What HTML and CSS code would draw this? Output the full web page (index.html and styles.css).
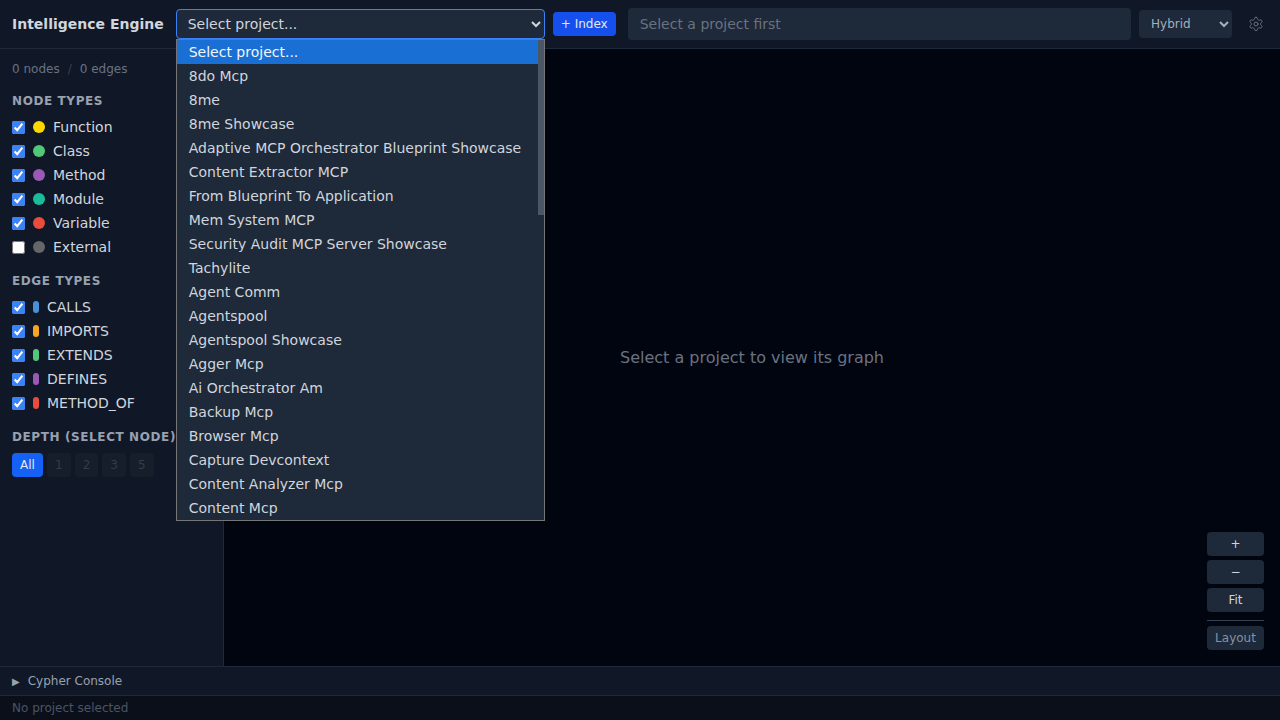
FILE: index.html
```html
<!DOCTYPE html>
<html lang="en">
<head>
<meta charset="utf-8">
<title>Intelligence Engine</title>
<link rel="stylesheet" href="styles.css">
</head>
<body>
<div class="app">
  <header class="topbar">
    <h1 class="brand">Intelligence Engine</h1>
    <div class="project-wrap">
      <select class="project-select"><option>Select project...</option></select>
      <div class="popup">
        <ul class="popup-list">
          <li class="active">Select project...</li>
          <li>8do Mcp</li>
          <li>8me</li>
          <li>8me Showcase</li>
          <li>Adaptive MCP Orchestrator Blueprint Showcase</li>
          <li>Content Extractor MCP</li>
          <li>From Blueprint To Application</li>
          <li>Mem System MCP</li>
          <li>Security Audit MCP Server Showcase</li>
          <li>Tachylite</li>
          <li>Agent Comm</li>
          <li>Agentspool</li>
          <li>Agentspool Showcase</li>
          <li>Agger Mcp</li>
          <li>Ai Orchestrator Am</li>
          <li>Backup Mcp</li>
          <li>Browser Mcp</li>
          <li>Capture Devcontext</li>
          <li>Content Analyzer Mcp</li>
          <li>Content Mcp</li>
        </ul>
        <div class="scrolltrack"><div class="scrollthumb"></div></div>
      </div>
    </div>
    <button class="index-btn">+ Index</button>
    <input class="search" placeholder="Select a project first" disabled>
    <select class="mode-select"><option>Hybrid</option></select>
    <button class="gear" aria-label="Settings">
      <svg width="16" height="16" viewBox="0 0 24 24" fill="none" stroke="currentColor" stroke-width="1.5" stroke-linecap="round" stroke-linejoin="round"><path d="M12.22 2h-.44a2 2 0 0 0-2 2v.18a2 2 0 0 1-1 1.73l-.43.25a2 2 0 0 1-2 0l-.15-.08a2 2 0 0 0-2.73.73l-.22.38a2 2 0 0 0 .73 2.73l.15.1a2 2 0 0 1 1 1.72v.51a2 2 0 0 1-1 1.74l-.15.09a2 2 0 0 0-.73 2.73l.22.38a2 2 0 0 0 2.73.73l.15-.08a2 2 0 0 1 2 0l.43.25a2 2 0 0 1 1 1.73V20a2 2 0 0 0 2 2h.44a2 2 0 0 0 2-2v-.18a2 2 0 0 1 1-1.73l.43-.25a2 2 0 0 1 2 0l.15.08a2 2 0 0 0 2.73-.73l.22-.39a2 2 0 0 0-.73-2.73l-.15-.08a2 2 0 0 1-1-1.74v-.5a2 2 0 0 1 1-1.74l.15-.09a2 2 0 0 0 .73-2.73l-.22-.38a2 2 0 0 0-2.73-.73l-.15.08a2 2 0 0 1-2 0l-.43-.25a2 2 0 0 1-1-1.73V4a2 2 0 0 0-2-2z"/><circle cx="12" cy="12" r="3"/></svg>
    </button>
  </header>

  <div class="main">
    <aside class="sidebar">
      <div class="stats"><span>0 nodes</span><span class="sep">/</span><span>0 edges</span></div>

      <h2 class="section-title first">NODE TYPES</h2>
      <label class="row"><input type="checkbox" checked><span class="dot c-yellow"></span>Function</label>
      <label class="row"><input type="checkbox" checked><span class="dot c-green"></span>Class</label>
      <label class="row"><input type="checkbox" checked><span class="dot c-purple"></span>Method</label>
      <label class="row"><input type="checkbox" checked><span class="dot c-teal"></span>Module</label>
      <label class="row"><input type="checkbox" checked><span class="dot c-red"></span>Variable</label>
      <label class="row"><input type="checkbox"><span class="dot c-gray"></span>External</label>

      <h2 class="section-title">EDGE TYPES</h2>
      <label class="row"><input type="checkbox" checked><span class="pill c-blue"></span>CALLS</label>
      <label class="row"><input type="checkbox" checked><span class="pill c-orange"></span>IMPORTS</label>
      <label class="row"><input type="checkbox" checked><span class="pill c-green"></span>EXTENDS</label>
      <label class="row"><input type="checkbox" checked><span class="pill c-purple"></span>DEFINES</label>
      <label class="row"><input type="checkbox" checked><span class="pill c-red"></span>METHOD_OF</label>

      <h2 class="section-title depth-title">DEPTH (SELECT NODE)</h2>
      <div class="depths">
        <button class="depth on">All</button>
        <button class="depth">1</button>
        <button class="depth">2</button>
        <button class="depth">3</button>
        <button class="depth">5</button>
      </div>
    </aside>

    <main class="canvas">
      <p class="empty">Select a project to view its graph</p>
      <div class="controls">
        <button class="ctl">+</button>
        <button class="ctl">−</button>
        <button class="ctl">Fit</button>
        <div class="ctl-sep"></div>
        <button class="ctl muted">Layout</button>
      </div>
    </main>
  </div>

  <div class="console"><span class="tri">▶</span>Cypher Console</div>
  <footer class="status">No project selected</footer>
</div>
</body>
</html>
```
FILE: styles.css
```css
* { box-sizing: border-box; }
html, body { margin: 0; height: 100%; }
body {
  font-family: "DejaVu Sans", sans-serif;
  background: #010510;
  color: #d1d5dc;
  overflow: hidden;
}
.app { display: flex; flex-direction: column; height: 720px; }

.topbar {
  height: 49px;
  flex: none;
  display: flex;
  align-items: center;
  padding: 0 12px;
  background: #101828;
  border-bottom: 1px solid #1e2939;
}
.brand {
  margin: 0 12px 0 0;
  font-size: 14px;
  font-weight: 700;
  color: #d1d5dc;
  white-space: nowrap;
}
.project-wrap { position: relative; width: 369px; height: 30px; flex: none; margin-right: 8px; }
.project-select {
  width: 100%;
  height: 30px;
  padding: 0 7px;
  font: 14px "DejaVu Sans", sans-serif;
  color: #d1d5dc;
  background: #1e2939;
  border: 1px solid #3b82f6;
  border-radius: 4px;
  outline: none;
}
.popup {
  position: absolute;
  top: 30px;
  left: 0;
  width: 369px;
  height: 482px;
  display: flex;
  background: #1e2939;
  border: 1px solid #767676;
  z-index: 5;
}
.popup-list { flex: 1; margin: 0; padding: 0; list-style: none; }
.popup-list li {
  height: 24px;
  line-height: 24px;
  padding-left: 12px;
  font-size: 14px;
  color: #d1d5dc;
  white-space: nowrap;
}
.popup-list li.active { background: #1a6fd4; color: #f1f5f9; }
.scrolltrack { width: 6px; background: #1e2939; }
.scrollthumb { height: 175px; background: #4a5565; }

.index-btn {
  width: 63px;
  height: 24px;
  flex: none;
  margin-right: 12px;
  padding: 0;
  font: 12px "DejaVu Sans", sans-serif;
  color: #e5e7eb;
  background: #1550ee;
  border: 0;
  border-radius: 4px;
}
.search {
  flex: 1;
  min-width: 0;
  height: 32px;
  margin-right: 8px;
  padding: 0 12px;
  font: 14px "DejaVu Sans", sans-serif;
  background: #1e2939;
  border: 0;
  border-radius: 4px;
}
.search::placeholder { color: #6a7282; opacity: 1; }
.mode-select {
  width: 93px;
  height: 28px;
  flex: none;
  padding: 0 8px;
  font: 12px "DejaVu Sans", sans-serif;
  color: #a3afbf;
  background: #1e2939;
  border: 0;
  border-radius: 4px;
}
.gear {
  width: 24px;
  height: 24px;
  flex: none;
  margin-left: 12px;
  padding: 0;
  display: flex;
  align-items: center;
  justify-content: center;
  color: #6a7282;
  background: none;
  border: 0;
}

.main { flex: 1; min-height: 0; display: flex; }
.sidebar {
  width: 224px;
  flex: none;
  padding: 12px;
  background: #101828;
  border-right: 1px solid #1e2939;
}
.stats { display: flex; gap: 8px; height: 16px; line-height: 16px; font-size: 12px; color: #6a7282; }
.sep { color: #364153; }
.section-title {
  margin: 14px 0 6px;
  height: 16px;
  line-height: 16px;
  font-size: 12px;
  font-weight: 700;
  letter-spacing: 0.6px;
  color: #99a1af;
  white-space: nowrap;
}
.section-title.first { margin-top: 16px; }
.section-title.depth-title { margin-bottom: 8px; }
.row {
  display: flex;
  align-items: center;
  height: 24px;
  font-size: 14px;
  color: #d1d5dc;
}
.row input {
  width: 13px;
  height: 13px;
  margin: 0 8px 0 0;
  accent-color: #3b82f6;
  flex: none;
}
.dot { width: 12px; height: 12px; border-radius: 50%; margin-right: 8px; flex: none; }
.pill { width: 6px; height: 12px; border-radius: 3px; margin-right: 8px; flex: none; }
.c-yellow { background: #ffd700; }
.c-green { background: #50c878; }
.c-purple { background: #9b59b6; }
.c-teal { background: #1abc9c; }
.c-red { background: #e74c3c; }
.c-gray { background: #666666; }
.c-blue { background: #4a90d9; }
.c-orange { background: #f5a623; }

.depths { display: flex; gap: 4px; }
.depth {
  height: 24px;
  min-width: 23px;
  padding: 0 8px;
  font: 12px "DejaVu Sans", sans-serif;
  color: #323c4c;
  background: #161e2c;
  border: 0;
  border-radius: 4px;
}
.depth.on { width: 31px; padding: 0; color: #e5e7eb; background: #1560f5; }

.canvas {
  flex: 1;
  position: relative;
  display: flex;
  align-items: center;
  justify-content: center;
  background: #010510;
}
.empty { margin: 0; font-size: 16px; color: #6a7282; }
.controls {
  position: absolute;
  right: 16px;
  bottom: 16px;
  width: 57px;
  display: flex;
  flex-direction: column;
  gap: 4px;
}
.ctl {
  height: 24px;
  padding: 0;
  font: 12px "DejaVu Sans", sans-serif;
  color: #d1d5dc;
  background: #1e2939;
  border: 0;
  border-radius: 4px;
}
.ctl.muted { color: #8492a6; }
.ctl-sep { height: 1px; background: #364153; margin: 4px 0 1px; }

.console {
  height: 30px;
  flex: none;
  display: flex;
  align-items: center;
  padding: 0 12px;
  font-size: 12px;
  color: #99a1af;
  background: #101828;
  border-top: 1px solid #1e2939;
  border-bottom: 1px solid #1e2939;
}
.tri { font-size: 10px; margin-right: 8px; }
.status {
  height: 24px;
  flex: none;
  padding: 0 12px;
  line-height: 24px;
  font-size: 12px;
  color: #4a5565;
  background: #0a0f1a;
}
```
